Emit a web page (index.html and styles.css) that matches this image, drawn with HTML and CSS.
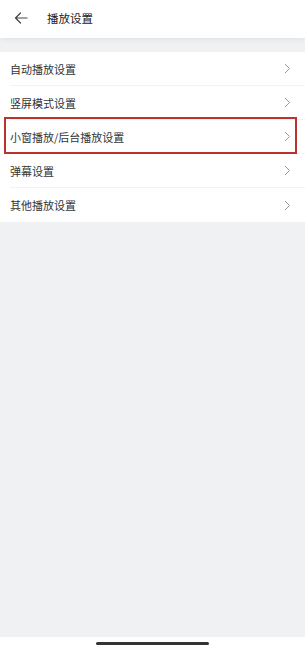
FILE: index.html
```html
<!DOCTYPE html>
<html lang="zh-CN">

<head>
    <meta charset="UTF-8">
    <meta name="viewport" content="width=device-width, initial-scale=1.0">
    <title>播放设置</title>
    <link rel="stylesheet" href="styles.css">
</head>

<body>
    <div class="page">
        <div class="header">
            <svg class="back" width="14" height="12" viewBox="0 0 14 12">
                <path d="M13 6H1.5M6.5 1L1.5 6l5 5" fill="none" stroke="#444" stroke-width="1.2" stroke-linecap="round" stroke-linejoin="round"/>
            </svg>
            <span class="title">播放设置</span>
        </div>

        <div class="content">
            <div class="list">
                <div class="row"><span>自动播放设置</span><svg class="chev" width="7" height="11" viewBox="0 0 7 11"><path d="M1 1l4.5 4.5L1 10" fill="none" stroke="#9a9a9a" stroke-width="1"/></svg></div>
                <div class="row"><span>竖屏模式设置</span><svg class="chev" width="7" height="11" viewBox="0 0 7 11"><path d="M1 1l4.5 4.5L1 10" fill="none" stroke="#9a9a9a" stroke-width="1"/></svg></div>
                <div class="row marked"><span>小窗播放/后台播放设置</span><svg class="chev" width="7" height="11" viewBox="0 0 7 11"><path d="M1 1l4.5 4.5L1 10" fill="none" stroke="#9a9a9a" stroke-width="1"/></svg></div>
                <div class="row"><span>弹幕设置</span><svg class="chev" width="7" height="11" viewBox="0 0 7 11"><path d="M1 1l4.5 4.5L1 10" fill="none" stroke="#9a9a9a" stroke-width="1"/></svg></div>
                <div class="row"><span>其他播放设置</span><svg class="chev" width="7" height="11" viewBox="0 0 7 11"><path d="M1 1l4.5 4.5L1 10" fill="none" stroke="#9a9a9a" stroke-width="1"/></svg></div>
            </div>
        </div>

        <div class="navbar">
            <div class="pill"></div>
        </div>
    </div>
</body>

</html>
```

FILE: styles.css
```css
body {
    margin: 0;
    font-family: "Noto Sans CJK SC", "Noto Sans", sans-serif;
    background-color: #f0f1f3;
}

.page {
    display: flex;
    flex-direction: column;
    height: 650px;
}

.header {
    height: 38px;
    display: flex;
    align-items: center;
    background-color: #fff;
    box-shadow: 0 1px 6px rgba(0, 0, 0, 0.08);
    position: relative;
    z-index: 1;
}

.back {
    margin-left: 14px;
    margin-top: -2px;
}

.title {
    margin-left: 19px;
    margin-top: -3px;
    font-size: 11.5px;
    color: #222;
}

.content {
    flex: 1;
    padding-top: 14px;
}

.list {
    background-color: #fff;
}

.row {
    height: 34px;
    margin-left: 10px;
    padding-right: 14px;
    display: flex;
    align-items: center;
    justify-content: space-between;
    border-bottom: 1px solid #f2f2f2;
    box-sizing: border-box;
    font-size: 11px;
    color: #333;
    position: relative;
}

.row:last-child {
    border-bottom: none;
}

.marked::after {
    content: "";
    position: absolute;
    top: -3px;
    bottom: -1px;
    left: -6px;
    right: 8px;
    border: 2px solid #b8342d;
}

.navbar {
    height: 13px;
    background-color: #fff;
    display: flex;
    justify-content: center;
    align-items: center;
}

.pill {
    width: 113px;
    height: 3px;
    border-radius: 2px;
    background-color: #333;
}
```
